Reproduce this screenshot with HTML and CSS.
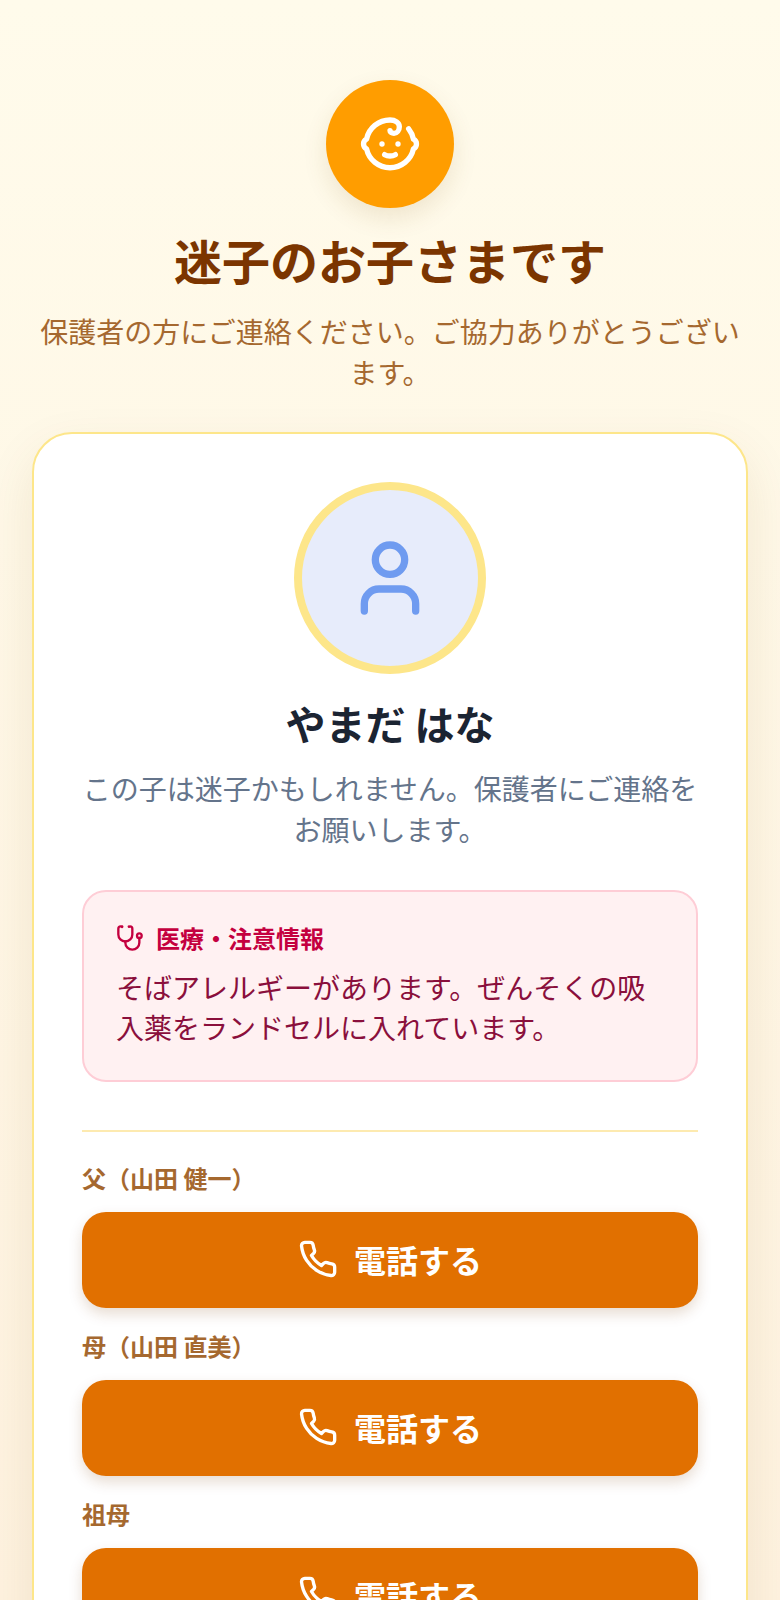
FILE: index.html
```html
<!DOCTYPE html>
<html lang="ja">
<head>
    <meta charset="UTF-8">
    <meta name="viewport" content="width=device-width, initial-scale=1.0">
    <title>迷子のお子さまです</title>
    <link rel="stylesheet" href="styles.css">
</head>
<body>
    <main class="page">
        <header class="hero">
            <div class="hero-badge">
                <svg class="icon" width="64" height="64" viewBox="0 0 24 24">
                    <path d="M9 12h.01"/>
                    <path d="M15 12h.01"/>
                    <path d="M10 16c.5.3 1.2.5 2 .5s1.5-.2 2-.5"/>
                    <path d="M19 6.3a9 9 0 0 1 1.8 3.9 2 2 0 0 1 0 3.6 9 9 0 0 1-17.6 0 2 2 0 0 1 0-3.6A9 9 0 0 1 12 3c2 0 3.5 1.1 3.5 2.5s-.9 2.5-2 2.5c-.8 0-1.5-.4-1.5-1"/>
                </svg>
            </div>
            <h1 class="hero-title">迷子のお子さまです</h1>
            <p class="hero-text">保護者の方にご連絡ください。ご協力ありがとうございます。</p>
        </header>

        <section class="card">
            <div class="avatar">
                <svg class="icon" width="88" height="88" viewBox="0 0 24 24">
                    <path d="M19 21v-2a4 4 0 0 0-4-4H9a4 4 0 0 0-4 4v2"/>
                    <circle cx="12" cy="7" r="4"/>
                </svg>
            </div>
            <h2 class="child-name">やまだ はな</h2>
            <p class="child-note">この子は迷子かもしれません。保護者にご連絡をお願いします。</p>

            <div class="medical">
                <div class="medical-head">
                    <svg class="icon" width="28" height="28" viewBox="0 0 24 24">
                        <path d="M4.8 2.3A.3.3 0 1 0 5 2H4a2 2 0 0 0-2 2v5a6 6 0 0 0 6 6v0a6 6 0 0 0 6-6V4a2 2 0 0 0-2-2h-1a.2.2 0 1 0 .3.3"/>
                        <path d="M8 15v1a6 6 0 0 0 6 6v0a6 6 0 0 0 6-6v-4"/>
                        <circle cx="20" cy="10" r="2"/>
                    </svg>
                    <span>医療・注意情報</span>
                </div>
                <p class="medical-text">そばアレルギーがあります。ぜんそくの吸入薬をランドセルに入れています。</p>
            </div>

            <div class="contacts">
                <div class="contact">
                    <div class="contact-label">父（山田 健一）</div>
                    <a class="call-btn" href="#">
                        <svg class="icon" width="40" height="40" viewBox="0 0 24 24">
                            <path d="M22 16.92v3a2 2 0 0 1-2.18 2 19.79 19.79 0 0 1-8.63-3.07 19.5 19.5 0 0 1-6-6 19.79 19.79 0 0 1-3.07-8.67A2 2 0 0 1 4.11 2h3a2 2 0 0 1 2 1.72 12.84 12.84 0 0 0 .7 2.81 2 2 0 0 1-.45 2.11L8.09 9.91a16 16 0 0 0 6 6l1.27-1.27a2 2 0 0 1 2.11-.45 12.84 12.84 0 0 0 2.81.7A2 2 0 0 1 22 16.92z"/>
                        </svg>
                        電話する
                    </a>
                </div>
                <div class="contact">
                    <div class="contact-label">母（山田 直美）</div>
                    <a class="call-btn" href="#">
                        <svg class="icon" width="40" height="40" viewBox="0 0 24 24">
                            <path d="M22 16.92v3a2 2 0 0 1-2.18 2 19.79 19.79 0 0 1-8.63-3.07 19.5 19.5 0 0 1-6-6 19.79 19.79 0 0 1-3.07-8.67A2 2 0 0 1 4.11 2h3a2 2 0 0 1 2 1.72 12.84 12.84 0 0 0 .7 2.81 2 2 0 0 1-.45 2.11L8.09 9.91a16 16 0 0 0 6 6l1.27-1.27a2 2 0 0 1 2.11-.45 12.84 12.84 0 0 0 2.81.7A2 2 0 0 1 22 16.92z"/>
                        </svg>
                        電話する
                    </a>
                </div>
                <div class="contact">
                    <div class="contact-label">祖母</div>
                    <a class="call-btn" href="#">
                        <svg class="icon" width="40" height="40" viewBox="0 0 24 24">
                            <path d="M22 16.92v3a2 2 0 0 1-2.18 2 19.79 19.79 0 0 1-8.63-3.07 19.5 19.5 0 0 1-6-6 19.79 19.79 0 0 1-3.07-8.67A2 2 0 0 1 4.11 2h3a2 2 0 0 1 2 1.72 12.84 12.84 0 0 0 .7 2.81 2 2 0 0 1-.45 2.11L8.09 9.91a16 16 0 0 0 6 6l1.27-1.27a2 2 0 0 1 2.11-.45 12.84 12.84 0 0 0 2.81.7A2 2 0 0 1 22 16.92z"/>
                        </svg>
                        電話する
                    </a>
                </div>
            </div>
        </section>
    </main>
</body>
</html>
```

FILE: styles.css
```css
* {
    box-sizing: border-box;
}
html, body {
    height: 1600px;
    overflow: hidden;
}
body {
    margin: 0;
    background: linear-gradient(to bottom, #fffbeb, #fef2df);
    font-family: "Noto Sans CJK JP", "Noto Sans", sans-serif;
}
.icon {
    display: block;
    flex: none;
    fill: none;
    stroke: currentColor;
    stroke-width: 2;
    stroke-linecap: round;
    stroke-linejoin: round;
}
.page {
    padding: 80px 32px 0;
}
.hero {
    display: flex;
    flex-direction: column;
    align-items: center;
    margin-bottom: 40px;
    text-align: center;
}
.hero-badge {
    display: flex;
    justify-content: center;
    align-items: center;
    width: 128px;
    height: 128px;
    margin-bottom: 24px;
    background: #ff9d00;
    color: #fff;
    border-radius: 50%;
    box-shadow: 0 10px 25px rgba(120, 80, 0, 0.12);
}
.hero-title {
    margin: 0 0 24px;
    font-size: 48px;
    font-weight: 700;
    line-height: 55px;
    color: #7b3500;
}
.hero-text {
    margin: 0;
    font-size: 28px;
    line-height: 1.45;
    color: #a5682f;
}
.card {
    padding: 48px;
    background: #fff;
    border: 2px solid #fde68a;
    border-radius: 40px 40px 0 0;
    box-shadow: 0 20px 50px rgba(120, 80, 0, 0.1);
}
.avatar {
    display: flex;
    justify-content: center;
    align-items: center;
    width: 192px;
    height: 192px;
    margin: 0 auto 24px;
    background: #e7ecfb;
    color: #6f9bf0;
    border: 8px solid #fde68a;
    border-radius: 50%;
}
.child-name {
    margin: 0 0 20px;
    font-size: 40px;
    font-weight: 700;
    line-height: 50px;
    text-align: center;
    color: #1b2432;
}
.child-note {
    margin: 0 0 41px;
    font-size: 28px;
    line-height: 1.45;
    text-align: center;
    color: #64748b;
}
.medical {
    padding: 31px 32px 33px;
    margin-bottom: 48px;
    background: #fff1f2;
    border: 2px solid #fecdd6;
    border-radius: 24px;
}
.medical-head {
    display: flex;
    align-items: center;
    gap: 12px;
    margin-bottom: 14px;
    font-size: 24px;
    font-weight: 700;
    line-height: 30px;
    color: #c4003f;
}
.medical-text {
    margin: 0;
    font-size: 28px;
    line-height: 40px;
    color: #8a0f3c;
}
.contacts {
    padding-top: 28px;
    border-top: 2px solid #fdeab0;
}
.contact {
    margin-bottom: 20px;
}
.contact-label {
    margin-bottom: 16px;
    font-size: 24px;
    font-weight: 700;
    line-height: 36px;
    color: #a5682f;
}
.call-btn {
    display: flex;
    justify-content: center;
    align-items: center;
    gap: 16px;
    height: 96px;
    padding-bottom: 3px;
    background: #e17000;
    color: #fff;
    font-size: 32px;
    font-weight: 700;
    text-decoration: none;
    border-radius: 24px;
    box-shadow: 0 6px 14px rgba(120, 60, 0, 0.18);
}
```
